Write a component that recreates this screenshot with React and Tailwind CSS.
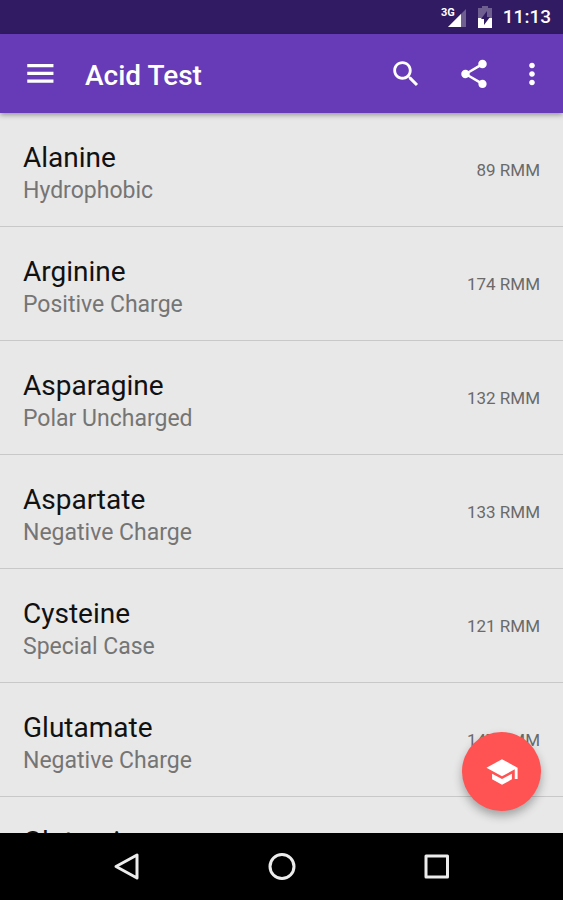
import { useState } from 'react'

const AMINO_ACIDS = [
  { name: 'Alanine', type: 'Hydrophobic', rmm: 89 },
  { name: 'Arginine', type: 'Positive Charge', rmm: 174 },
  { name: 'Asparagine', type: 'Polar Uncharged', rmm: 132 },
  { name: 'Aspartate', type: 'Negative Charge', rmm: 133 },
  { name: 'Cysteine', type: 'Special Case', rmm: 121 },
  { name: 'Glutamate', type: 'Negative Charge', rmm: 147 },
  { name: 'Glutamine', type: 'Polar Uncharged', rmm: 146 },
]

const ICONS = {
  menu: 'M3 18.200h18.500v-2.300H3v2.300zm0-5.500h18.500v-2.300H3v2.300zm0-7.800v2.300h18.500V4.900H3z',
  search: 'M15.5 14h-.79l-.28-.27C15.41 12.59 16 11.11 16 9.5 16 5.91 13.09 3 9.5 3S3 5.91 3 9.5 5.91 16 9.5 16c1.61 0 3.09-.59 4.23-1.57l.27.28v.79l5 4.99L20.49 19l-4.99-5zm-6 0C7.01 14 5 11.99 5 9.5S7.01 5 9.5 5 14 7.01 14 9.5 11.99 14 9.5 14z',
  share: 'M18 16.08c-.76 0-1.44.3-1.96.77L8.91 12.7c.05-.23.09-.46.09-.7s-.04-.47-.09-.7l7.05-4.11c.54.5 1.25.81 2.04.81 1.66 0 3-1.34 3-3s-1.34-3-3-3-3 1.34-3 3c0 .24.04.47.09.7L8.04 9.81C7.5 9.31 6.79 9 6 9c-1.66 0-3 1.34-3 3s1.34 3 3 3c.79 0 1.5-.31 2.04-.81l7.12 4.16c-.05.21-.08.43-.08.65 0 1.61 1.31 2.92 2.92 2.92 1.61 0 2.92-1.31 2.92-2.92s-1.31-2.92-2.92-2.92z',
  more: 'M12 8c1.1 0 2-.9 2-2s-.9-2-2-2-2 .9-2 2 .9 2 2 2zm0 2c-1.1 0-2 .9-2 2s.9 2 2 2 2-.9 2-2-.9-2-2-2zm0 6c-1.1 0-2 .9-2 2s.9 2 2 2 2-.9 2-2-.9-2-2-2z',
  school: 'M5 13.18v4L12 21l7-3.82v-4L12 17l-7-3.82zM12 3L1 9l11 6 9-4.91V17h2V9L12 3z',
}

function Icon({ name, className = 'size-[34px]' }) {
  return (
    <svg viewBox="0 0 24 24" fill="currentColor" className={className} aria-hidden="true">
      <path d={ICONS[name]} />
    </svg>
  )
}

function StatusBar() {
  return (
    <div className="flex h-[34px] shrink-0 items-center justify-end gap-[11px] bg-[#311b62] pr-3 text-white">
      <svg viewBox="0 0 26 24" className="h-6 w-[26px]" aria-label="3G signal">
        <path d="M25 4v18H7z" fill="#fff" fillOpacity="0.3" />
        <path d="M20 9v13H7z" fill="#fff" />
        <text x="0" y="11" fill="#fff" className="text-[11px] font-bold">3G</text>
      </svg>
      <svg viewBox="0 0 14 24" className="h-6 w-[14px]" aria-label="Battery">
        <path d="M4 1h6v2h4v11H0V3h4z" fill="#fff" fillOpacity="0.3" />
        <path d="M0 13h14v10H0z" fill="#fff" />
        <path d="M9 6v6h3l-6 8v-6H3z" fill="#311b62" />
      </svg>
      <span className="text-[19px] leading-6 font-medium">11:13</span>
    </div>
  )
}

function AppBar() {
  return (
    <header className="z-10 flex h-[79px] shrink-0 items-center bg-[#673ab7] pr-[14px] pl-[23px] text-white shadow-[0_2px_5px_rgba(0,0,0,0.35)]">
      <button aria-label="Menu"><Icon name="menu" /></button>
      <h1 className="ml-7 pt-1 text-[28px] leading-8 font-medium">Acid Test</h1>
      <div className="ml-auto flex items-center">
        <button aria-label="Search" className="mr-[34px]"><Icon name="search" /></button>
        <button aria-label="Share" className="mr-6"><Icon name="share" /></button>
        <button aria-label="More options"><Icon name="more" /></button>
      </div>
    </header>
  )
}

function AcidRow({ acid }) {
  return (
    <li className="flex h-[114px] items-center justify-between border-b border-[#c8c8c8] px-[23px]">
      <div className="pt-2">
        <p className="text-[28px] leading-[34px] text-[#111]">{acid.name}</p>
        <p className="text-[23px] leading-8 text-[#757575]">{acid.type}</p>
      </div>
      <p className="text-[17px] leading-6 text-[#6a6a6a]">{acid.rmm} RMM</p>
    </li>
  )
}

function NavBar() {
  return (
    <nav className="flex h-[67px] shrink-0 items-center justify-center gap-[121px] bg-black text-[#ececec]">
      <button aria-label="Back">
        <svg viewBox="0 0 34 34" className="size-[34px]" fill="none" stroke="currentColor" strokeWidth="3" strokeLinejoin="round">
          <path d="M27 5v23L6 16.500z" />
        </svg>
      </button>
      <button aria-label="Home">
        <svg viewBox="0 0 34 34" className="size-[34px]" fill="none" stroke="currentColor" strokeWidth="3">
          <circle cx="17" cy="16.500" r="12" />
        </svg>
      </button>
      <button aria-label="Recent apps">
        <svg viewBox="0 0 34 34" className="size-[34px]" fill="none" stroke="currentColor" strokeWidth="3" strokeLinejoin="round">
          <path d="M6 6h21.500v21H6z" />
        </svg>
      </button>
    </nav>
  )
}

export default function App() {
  const [acids] = useState(AMINO_ACIDS)

  return (
    <div className="flex h-screen flex-col bg-[#e8e8e8] font-['Roboto',sans-serif]">
      <StatusBar />
      <AppBar />
      <main className="relative min-h-0 flex-1">
        <ul className="h-full overflow-y-auto [scrollbar-width:none]">
          {acids.map((acid) => <AcidRow key={acid.name} acid={acid} />)}
        </ul>
        <button
          aria-label="Start test"
          className="absolute right-[22px] bottom-[22px] flex size-[79px] items-center justify-center rounded-full bg-[#ff5252] text-white shadow-[0_5px_10px_rgba(0,0,0,0.3)]"
        >
          <Icon name="school" />
        </button>
      </main>
      <NavBar />
    </div>
  )
}
